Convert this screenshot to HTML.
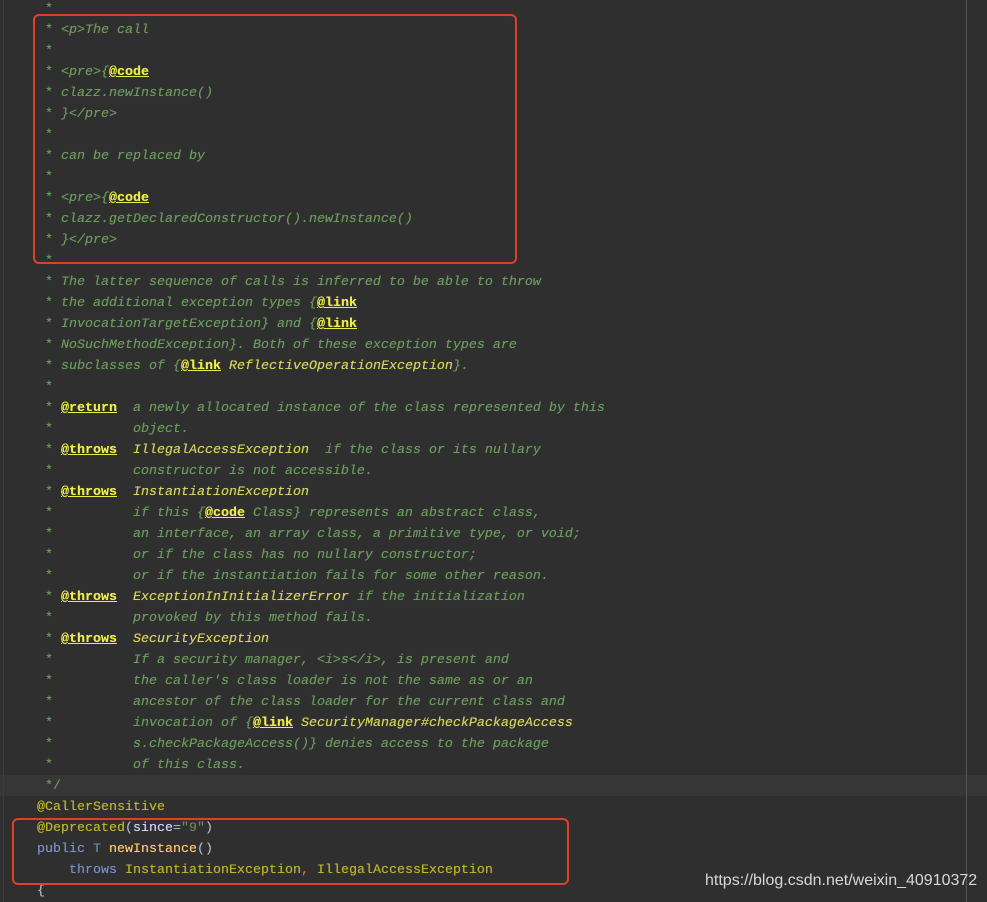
<!DOCTYPE html>
<html><head><meta charset="utf-8"><style>
html,body{margin:0;padding:0}
body{width:987px;height:902px;background:#2f2f2f;position:relative;overflow:hidden;font-family:"Liberation Mono",monospace;font-size:13.33px}
.code{position:absolute;left:37px;top:-1px;white-space:pre;line-height:21px;color:#a9b7c6;text-shadow:0 0 0.4px currentColor}
.c{color:#6a9a5c;font-style:italic}
.s{font-style:normal}
.t{color:#ecec4a;font-weight:bold;text-decoration:underline;font-style:normal}
.y{color:#d6d45a}
.an{color:#bbb529}
.kw{color:#7a8fc6}
.ty{color:#6f8a9a}
.fn{color:#ffc66d}
.st{color:#6a8759}
.cur{position:absolute;left:0;top:775px;width:987px;height:21px;background:#363636}
.vl{position:absolute;left:966px;top:0;width:1px;height:902px;background:#555}
.box{position:absolute;border:2px solid #e0402a;border-radius:6px}
.wm{position:absolute;left:705px;top:872px;font-family:"Liberation Sans",sans-serif;font-size:16px;color:#d8d8d8}
.gut{position:absolute;left:3px;top:0;width:1px;height:902px;background:#3c3c3c}
</style></head><body>
<div class="cur"></div>
<div class="gut"></div>
<div class="vl"></div>
<div class="code"><span class="c"><span class="s"> *</span>
<span class="s"> *</span> &lt;p&gt;The call
<span class="s"> *</span>
<span class="s"> *</span> &lt;pre&gt;{<span class="t">@code</span>
<span class="s"> *</span> clazz.newInstance()
<span class="s"> *</span> }&lt;/pre&gt;
<span class="s"> *</span>
<span class="s"> *</span> can be replaced by
<span class="s"> *</span>
<span class="s"> *</span> &lt;pre&gt;{<span class="t">@code</span>
<span class="s"> *</span> clazz.getDeclaredConstructor().newInstance()
<span class="s"> *</span> }&lt;/pre&gt;
<span class="s"> *</span>
<span class="s"> *</span> The latter sequence of calls is inferred to be able to throw
<span class="s"> *</span> the additional exception types {<span class="t">@link</span>
<span class="s"> *</span> InvocationTargetException} and {<span class="t">@link</span>
<span class="s"> *</span> NoSuchMethodException}. Both of these exception types are
<span class="s"> *</span> subclasses of {<span class="t">@link</span> <span class="y">ReflectiveOperationException</span>}.
<span class="s"> *</span>
<span class="s"> *</span> <span class="t">@return</span>  a newly allocated instance of the class represented by this
<span class="s"> *</span>          object.
<span class="s"> *</span> <span class="t">@throws</span>  <span class="y">IllegalAccessException</span>  if the class or its nullary
<span class="s"> *</span>          constructor is not accessible.
<span class="s"> *</span> <span class="t">@throws</span>  <span class="y">InstantiationException</span>
<span class="s"> *</span>          if this {<span class="t">@code</span> Class} represents an abstract class,
<span class="s"> *</span>          an interface, an array class, a primitive type, or void;
<span class="s"> *</span>          or if the class has no nullary constructor;
<span class="s"> *</span>          or if the instantiation fails for some other reason.
<span class="s"> *</span> <span class="t">@throws</span>  <span class="y">ExceptionInInitializerError</span> if the initialization
<span class="s"> *</span>          provoked by this method fails.
<span class="s"> *</span> <span class="t">@throws</span>  <span class="y">SecurityException</span>
<span class="s"> *</span>          If a security manager, &lt;i&gt;s&lt;/i&gt;, is present and
<span class="s"> *</span>          the caller's class loader is not the same as or an
<span class="s"> *</span>          ancestor of the class loader for the current class and
<span class="s"> *</span>          invocation of {<span class="t">@link</span> <span class="y">SecurityManager#checkPackageAccess</span>
<span class="s"> *</span>          s.checkPackageAccess()} denies access to the package
<span class="s"> *</span>          of this class.
<span class="s"> */</span></span>
<span class="an">@CallerSensitive</span>
<span class="an">@Deprecated</span>(<span style="color:#d0d0ff">since</span>=<span class="st">"9"</span>)
<span class="kw">public</span> <span class="ty">T</span> <span class="fn">newInstance</span>()
    <span class="kw">throws</span> <span class="an">InstantiationException</span><span style="color:#cc7832">,</span> <span class="an">IllegalAccessException</span>
{</div>
<div class="box" style="left:33px;top:14px;width:480px;height:246px"></div>
<div class="box" style="left:12px;top:818px;width:553px;height:63px"></div>
<div class="wm">https://blog.csdn.net/weixin_40910372</div>
</body></html>
